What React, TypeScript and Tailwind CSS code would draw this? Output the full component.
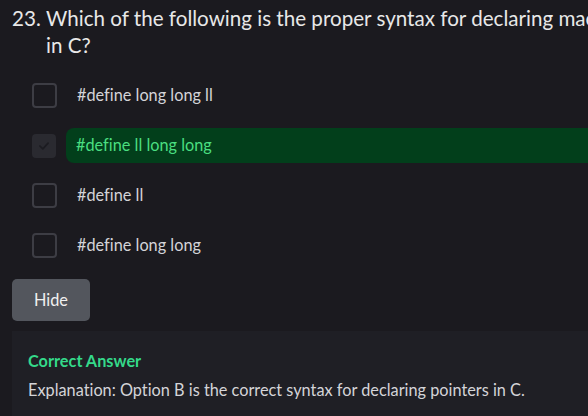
import React from "react";

const options = [
  { text: "#define long long ll", correct: false },
  { text: "#define ll long long", correct: true },
  { text: "#define ll", correct: false },
  { text: "#define long long", correct: false },
];

export default function App() {
  return (
    <div
      className="w-[588px] h-[416px] overflow-hidden bg-[#1b1a1f] text-[#e4e4e7]"
      style={{ fontFamily: "Lato, 'Open Sans', sans-serif", fontVariantLigatures: "none" }}
    >
      <div className="w-[626px] pl-[12px] pt-[5px]">
        <div className="flex text-[20.6px] leading-[27px] text-[#e8e8e8]">
          <span className="w-[34px] shrink-0">23.</span>
          <span>Which of the following is the proper syntax for declaring macros in C?</span>
        </div>
        <div className="mt-[19px] flex flex-col gap-[15px] pl-[20px]">
          {options.map((o) => (
            <div key={o.text} className="flex items-center h-[35px]">
              {o.correct ? (
                <div className="w-[24px] h-[24px] rounded-[4px] bg-[#2a2a30] flex items-center justify-center shrink-0">
                  <svg width="14" height="14" viewBox="0 0 24 24" fill="none" stroke="#1c1c21" strokeWidth="3" strokeLinecap="round" strokeLinejoin="round">
                    <path d="M5 12l5 5 9-10" />
                  </svg>
                </div>
              ) : (
                <div className="w-[25px] h-[25px] rounded-[4px] border-2 border-[#3d3d44] shrink-0" />
              )}
              <div
                className={
                  o.correct
                    ? "ml-[10px] flex-1 h-[35px] flex items-center pl-[10px] rounded-l-[8px] bg-[#023f1b] text-[#4ade80] text-[16.3px]"
                    : "ml-[10px] pl-[10px] text-[16.3px] text-[#d4d4d8]"
                }
              >
                {o.text}
              </div>
            </div>
          ))}
        </div>
        <button className="mt-[16px] w-[78px] h-[42px] rounded-[5px] bg-[#53565d] text-[16.3px] text-[#f0f0f0]">
          Hide
        </button>
        <div className="mt-[10px] bg-[#1f1f25] pl-[16px] pt-[18px] pb-[20px]">
          <div className="text-[16.3px] font-bold text-[#34d98a]">Correct Answer</div>
          <div className="mt-[5px] text-[16.3px] text-[#d4d4d8]">
            Explanation: Option B is the correct syntax for declaring pointers in C.
          </div>
        </div>
      </div>
    </div>
  );
}
